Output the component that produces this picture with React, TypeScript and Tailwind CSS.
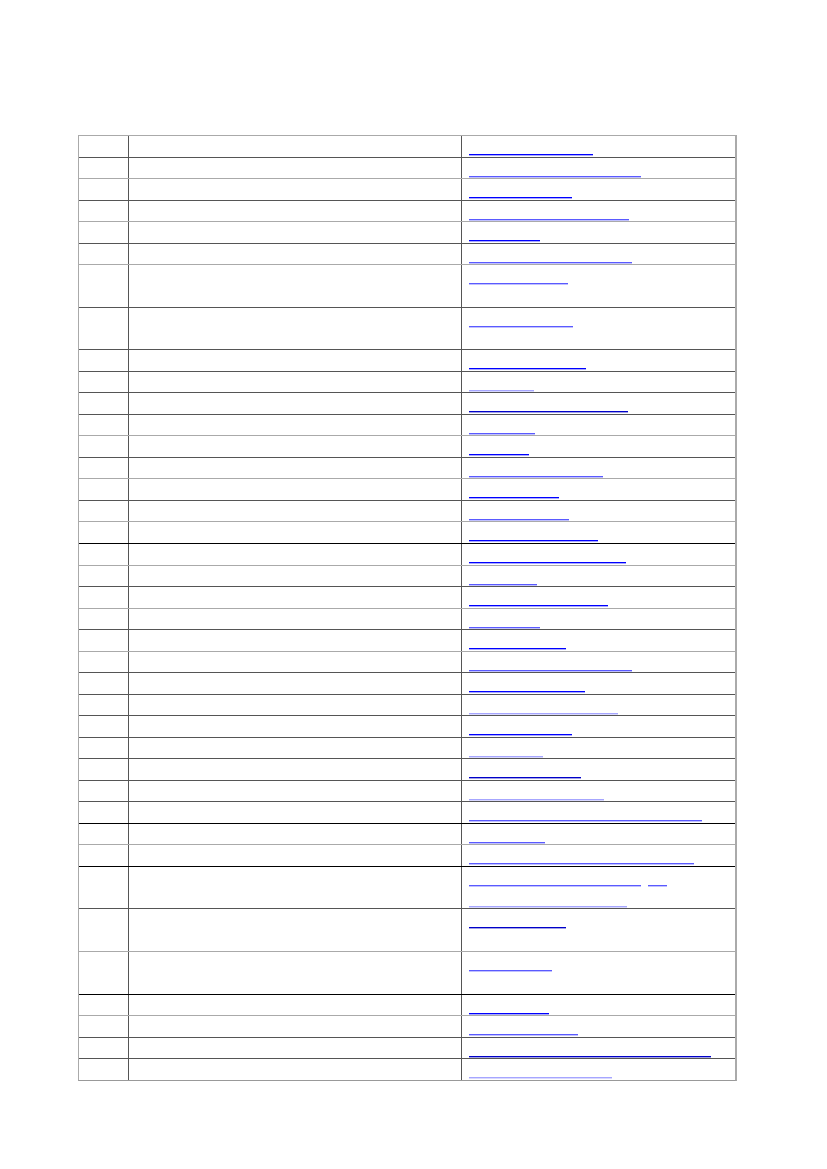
type Tone = 'a' | 'd' | 'b' | 'c';
type Line = [number, Tone][];
type Row = { h: string; edge: 'dark' | 'light' | 'black'; lines: Line[] };

const edgeClass = {
  dark: 'border-t-[#555555]',
  light: 'border-t-[#aaaaaa]',
  black: 'border-t-black',
};

const toneClass = {
  a: 'bg-[#0000ff] shadow-[0_1px_0_#a8a8ff]',
  d: 'bg-[#0000c8] shadow-[0_1px_0_#a0a0e8]',
  b: 'bg-[#5a5aff] shadow-[0_1px_0_#c0c0ff]',
  c: 'bg-[#a6a6ff] shadow-[0_1px_0_#d8d8ff]',
};

const rows: Row[] = [
  { h: 'h-[22px]', edge: 'light', lines: [[[124, 'a']]] },
  { h: 'h-[21px]', edge: 'dark', lines: [[[172, 'b']]] },
  { h: 'h-[22px]', edge: 'light', lines: [[[103, 'a']]] },
  { h: 'h-[21px]', edge: 'dark', lines: [[[160, 'b']]] },
  { h: 'h-[22px]', edge: 'light', lines: [[[71, 'a']]] },
  { h: 'h-[21px]', edge: 'dark', lines: [[[163, 'b']]] },
  { h: 'h-[43px]', edge: 'light', lines: [[[99, 'b']]] },
  { h: 'h-[42px]', edge: 'dark', lines: [[[104, 'b']]] },
  { h: 'h-[22px]', edge: 'dark', lines: [[[117, 'a']]] },
  { h: 'h-[21px]', edge: 'dark', lines: [[[65, 'c']]] },
  { h: 'h-[22px]', edge: 'dark', lines: [[[159, 'd']]] },
  { h: 'h-[21px]', edge: 'dark', lines: [[[66, 'b']]] },
  { h: 'h-[22px]', edge: 'light', lines: [[[60, 'a']]] },
  { h: 'h-[21px]', edge: 'dark', lines: [[[134, 'b']]] },
  { h: 'h-[22px]', edge: 'light', lines: [[[90, 'a']]] },
  { h: 'h-[21px]', edge: 'dark', lines: [[[100, 'b']]] },
  { h: 'h-[22px]', edge: 'light', lines: [[[129, 'a']]] },
  { h: 'h-[22px]', edge: 'black', lines: [[[157, 'a']]] },
  { h: 'h-[21px]', edge: 'light', lines: [[[68, 'b']]] },
  { h: 'h-[22px]', edge: 'dark', lines: [[[139, 'a']]] },
  { h: 'h-[21px]', edge: 'light', lines: [[[71, 'b']]] },
  { h: 'h-[22px]', edge: 'dark', lines: [[[97, 'a']]] },
  { h: 'h-[21px]', edge: 'light', lines: [[[163, 'b']]] },
  { h: 'h-[22px]', edge: 'dark', lines: [[[116, 'a']]] },
  { h: 'h-[21px]', edge: 'dark', lines: [[[149, 'c']]] },
  { h: 'h-[22px]', edge: 'dark', lines: [[[103, 'a']]] },
  { h: 'h-[21px]', edge: 'dark', lines: [[[74, 'c']]] },
  { h: 'h-[22px]', edge: 'dark', lines: [[[112, 'd']]] },
  { h: 'h-[21px]', edge: 'dark', lines: [[[135, 'c']]] },
  { h: 'h-[22px]', edge: 'dark', lines: [[[233, 'b']]] },
  { h: 'h-[21px]', edge: 'black', lines: [[[76, 'b']]] },
  { h: 'h-[22px]', edge: 'light', lines: [[[225, 'b']]] },
  { h: 'h-[42px]', edge: 'black', lines: [[[172, 'b'], [19, 'b']], [[158, 'c']]] },
  { h: 'h-[43px]', edge: 'dark', lines: [[[97, 'd']]] },
  { h: 'h-[43px]', edge: 'light', lines: [[[83, 'b']]] },
  { h: 'h-[21px]', edge: 'black', lines: [[[80, 'a']]] },
  { h: 'h-[22px]', edge: 'light', lines: [[[109, 'b']]] },
  { h: 'h-[21px]', edge: 'dark', lines: [[[242, 'd']]] },
  { h: 'h-[22px]', edge: 'dark', lines: [[[143, 'c']]] },
];

const App = () => {
  return (
    <div className="min-h-[1169px] w-[827px] bg-white pt-[135px] font-['Liberation_Sans',Arial,sans-serif]">
      <div className="ml-[78px] w-[659px] border-l border-r-2 border-b border-l-[#aaaaaa] border-r-[#aaaaaa] border-b-[#999999]">
        {rows.map((row, i) => (
          <div key={i} className={`flex border-t ${row.h} ${edgeClass[row.edge]}`}>
            <div className="w-[50px] shrink-0 border-r border-r-[#555555]" />
            <div className="w-[333px] shrink-0 border-r border-r-[#555555]" />
            <div className="flex-1 pl-[7px]">
              {row.lines.map((line, j) => (
                <div key={j} className="flex h-[21px] gap-[7px] pt-[18px]">
                  {line.map(([w, tone], k) => (
                    <span key={k} className={`block h-px ${toneClass[tone]}`} style={{ width: w }} />
                  ))}
                </div>
              ))}
            </div>
          </div>
        ))}
      </div>
    </div>
  );
};

export default App;
